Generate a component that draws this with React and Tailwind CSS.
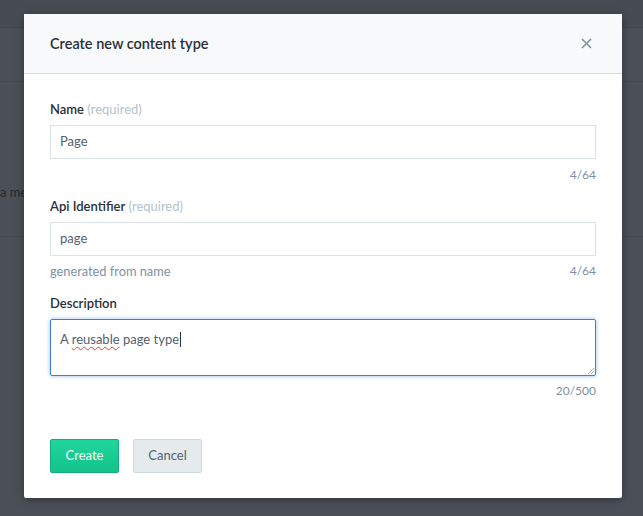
export default function App() {
  return (
    <div
      className="relative h-[516px] w-[643px] overflow-hidden bg-[#4b5058] text-[13px] text-[#2a3039]"
      style={{ fontFamily: "Lato, 'Open Sans', sans-serif" }}
    >
      {/* page behind the dialog */}
      <div className="h-[28px] border-b border-[#41464d] bg-[#474c53]" />
      <div className="h-[54px] border-b border-[#454a51]" />
      <div className="flex h-[155px] items-center border-b border-[#454a51] pt-[68px]">
        <span className="text-[13px] text-[#24282d]">a me</span>
      </div>

      {/* dialog */}
      <div className="absolute left-[24px] top-[14px] flex h-[484px] w-[598px] flex-col rounded-[2px] bg-white shadow-[0_2px_10px_rgba(0,0,0,0.35)]">
        <div className="flex h-[60px] shrink-0 items-center justify-between border-b border-[#d3dce0] bg-[#f7f9fa] pl-[26px] pr-[30px]">
          <h2 className="text-[14.5px] font-semibold text-[#2a3039]">Create new content type</h2>
          <svg width="11" height="11" viewBox="0 0 11 11" className="text-[#8091a5]">
            <path d="M1 1L10 10M10 1L1 10" stroke="currentColor" strokeWidth="1.6" />
          </svg>
        </div>

        <div className="flex flex-col px-[26px] pt-[26px]">
          <label className="h-[18px] leading-[18px]">
            <span className="font-semibold">Name</span>{" "}
            <span className="text-[#b4c3ca]">(required)</span>
          </label>
          <div className="mt-[7px] flex h-[34px] items-center border border-[#dbe3e7] px-[9px] text-[#536171]">
            Page
          </div>
          <div className="mt-[8px] h-[16px] text-right text-[12px] leading-[16px] text-[#8091a5]">4/64</div>

          <label className="mt-[14px] h-[18px] leading-[18px]">
            <span className="font-semibold">Api Identifier</span>{" "}
            <span className="text-[#b4c3ca]">(required)</span>
          </label>
          <div className="mt-[7px] flex h-[34px] items-center border border-[#dbe3e7] px-[9px] text-[#536171]">
            page
          </div>
          <div className="mt-[7px] flex h-[16px] items-center justify-between leading-[16px] text-[#8091a5]">
            <span className="text-[12.8px]">generated from name</span>
            <span className="text-[12px]">4/64</span>
          </div>

          <label className="mt-[15px] h-[18px] leading-[18px] font-semibold">Description</label>
          <div className="relative mt-[7px] h-[57px] rounded-[2px] border border-[#3c80cf] px-[9px] pt-[9px] text-[#536171] shadow-[0_0_4px_#97bdea]">
            A{" "}
            <span className="underline decoration-[#e0443a] decoration-wavy decoration-1 underline-offset-2">reusable</span>{" "}
            page type<span className="ml-[1px] inline-block h-[15px] w-px translate-y-[3px] bg-[#2a3039]" />
            <svg width="7" height="7" viewBox="0 0 7 7" className="absolute bottom-[1px] right-[1px] text-[#9aa3ab]">
              <path d="M7 1L1 7M7 4L4 7" stroke="currentColor" strokeWidth="0.9" />
            </svg>
          </div>
          <div className="mt-[7px] h-[16px] text-right text-[12px] leading-[16px] text-[#8091a5]">20/500</div>

          <div className="mt-[40px] flex gap-[14px]">
            <button className="h-[34px] w-[69px] rounded-[2px] border border-[#14ad78] bg-gradient-to-b from-[#1fd69c] to-[#14c28a] text-[#f4fffa]">
              Create
            </button>
            <button className="h-[34px] w-[69px] rounded-[2px] border border-[#cfd9e0] bg-[#e5ebed] text-[#536171]">
              Cancel
            </button>
          </div>
        </div>
      </div>
    </div>
  );
}
